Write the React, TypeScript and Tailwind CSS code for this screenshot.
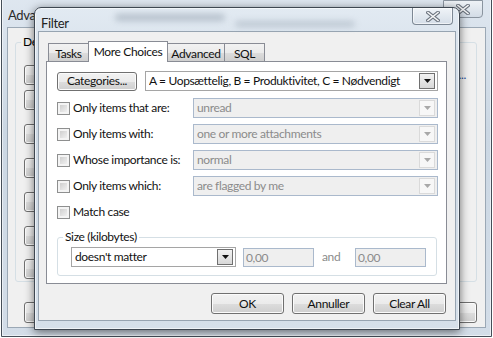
import React from 'react';

const btn =
  'flex items-center justify-center rounded-[3px] border border-[#707070] bg-[linear-gradient(to_bottom,#f2f2f2_0%,#ebebeb_50%,#dddddd_51%,#cfcfcf_100%)] shadow-[inset_0_0_0_1px_#fbfbfb] text-[#111]';

const Arrow = ({ color }: { color: string }) => (
  <svg width="7" height="4" viewBox="0 0 7 4">
    <path d="M0 0h7L3.5 4z" fill={color} />
  </svg>
);

const CloseX = () => (
  <svg width="14" height="11" viewBox="0 0 14 11">
    <path d="M2 1.5l10 8M12 1.5l-10 8" stroke="#6e7681" strokeWidth="3.6" strokeLinecap="square" />
    <path d="M2 1.5l10 8M12 1.5l-10 8" stroke="#f6f7f8" strokeWidth="1.6" strokeLinecap="square" />
  </svg>
);

const Check = () => (
  <span className="w-[13px] h-[13px] border border-[#8e8f8f] bg-[#f4f4f4] p-[2px] shrink-0">
    <span className="block w-full h-full bg-[linear-gradient(135deg,#cfcfcf,#f0f0f0)]" />
  </span>
);

// combo box, enabled
const Combo = ({ text, w }: { text: string; w: string }) => (
  <div className={`flex items-center h-[20px] ${w} border border-[#a5a5a5] bg-white pl-[3px] pr-[2px]`}>
    <span className="flex-1 truncate text-[#111]">{text}</span>
    <span className="w-[16px] h-[16px] flex items-center justify-center border border-[#707070] bg-[linear-gradient(to_bottom,#f2f2f2,#d8d8d8)]">
      <Arrow color="#111" />
    </span>
  </div>
);

// combo box, disabled
const DisCombo = ({ text }: { text: string }) => (
  <div className="flex items-center h-[20px] w-[245px] border border-[#aab9cc] bg-[#efefef] pl-[3px] pr-[2px]">
    <span className="flex-1 truncate text-[#8b8b8b]">{text}</span>
    <span className="w-[16px] h-[16px] flex items-center justify-center border border-[#dadada] bg-[#f7f7f7]">
      <Arrow color="#a8a8a8" />
    </span>
  </div>
);

const rows = [
  ['Only items that are:', 'unread'],
  ['Only items with:', 'one or more attachments'],
  ['Whose importance is:', 'normal'],
  ['Only items which:', 'are flagged by me'],
];

const tabs = [
  { label: 'Tasks', w: 'w-[41px]' },
  { label: 'More Choices', w: 'w-[80px]', active: true },
  { label: 'Advanced', w: 'w-[58px]' },
  { label: 'SQL', w: 'w-[41px]' },
];

const BackWindow = () => (
  <div className="absolute left-[1px] top-[-8px] w-[491px] h-[345px] rounded-t-[7px] border border-[#454e58] bg-[linear-gradient(to_bottom,#dfe7f0,#cbd7e3_40%,#d3dde8)] shadow-[inset_0_0_0_1px_rgba(255,255,255,0.55)]">
    <div className="h-[35px] pl-[6px] pt-[14px] text-[13px] text-[#2b2b2b]">
      <div className="w-[27px] overflow-hidden whitespace-nowrap">Advanced Find</div>
    </div>
    <div className="absolute right-[8px] top-[7px] w-[40px] h-[18px] rounded-b-[4px] border border-[#8a949f] bg-[linear-gradient(to_bottom,#eef2f6,#d3dce6)] flex items-center justify-center">
      <CloseX />
    </div>
    <div className="ml-[6px] mr-[6px] h-[299px] bg-[#f0f0f0] shadow-[0_0_0_1px_#9ba8b5] flex flex-col">
      <div className="relative mt-[14px] ml-[7px] mr-[8px] h-[240px] border border-[#d5dfe5] rounded-[3px] flex flex-col pl-[8px] pr-[10px]">
        <span className="absolute -top-[9px] left-[5px] px-[2px] bg-[#f0f0f0]">Details</span>
        <div className="mt-[22px] flex justify-between items-center">
          <div className={`${btn} w-[90px] h-[20px]`} />
          <span className="text-[#1f4f9a]">...</span>
        </div>
        <div className={`${btn} w-[90px] h-[20px] mt-[5px]`} />
        <div className={`${btn} w-[90px] h-[20px] mt-[14px]`} />
        <div className={`${btn} w-[90px] h-[20px] mt-[14px]`} />
        <div className={`${btn} w-[90px] h-[20px] mt-[14px]`} />
        <div className={`${btn} w-[90px] h-[20px] mt-[14px]`} />
        <div className={`${btn} w-[90px] h-[20px] mt-[13px]`} />
      </div>
      <div className="mt-[20px] ml-[16px] mr-[8px] flex justify-between">
        <div className={`${btn} w-[90px] h-[21px]`} />
        <div className={`${btn} w-[90px] h-[21px]`} />
      </div>
    </div>
  </div>
);

const FilterWindow = () => (
  <div className="absolute left-[34px] top-[7px] w-[426px] h-[323px] rounded-t-[7px] border border-[#3e4751] bg-[linear-gradient(to_bottom,#e2eaf2,#cfdae6_30%,#d6e0ea)] shadow-[0_2px_10px_rgba(0,0,0,0.55),inset_0_0_0_1px_rgba(255,255,255,0.6)] flex flex-col">
    <div className="h-[24px] relative pl-[6px] pt-[7px] text-[13px] text-[#222]">
      Filter
      {/* blurred desktop behind the glass */}
      <div className="absolute left-[80px] top-[6px] w-[110px] h-[7px] rounded-full bg-[#9aa6b3] blur-[3px] opacity-60" />
      <div className="absolute left-[200px] top-[13px] w-[120px] h-[6px] rounded-full bg-[#9aa6b3] blur-[3px] opacity-50" />
      <div className="absolute right-[6px] top-0 w-[41px] h-[17px] rounded-b-[4px] border border-t-0 border-[#7d8894] bg-[linear-gradient(to_bottom,#f0f4f8,#d5dee8)] shadow-[inset_0_0_0_1px_rgba(255,255,255,0.6)] flex items-center justify-center">
        <CloseX />
      </div>
    </div>
    <div className="mx-[4px] h-[288px] bg-[#f0f0f0] shadow-[0_0_0_1px_#97a4b1] flex flex-col pl-[7px] pr-[8px] pt-[9px]">
      {/* tabs */}
      <div className="flex items-end h-[20px] pl-[2px] relative z-10">
        {tabs.map((t) =>
          t.active ? (
            <div
              key={t.label}
              className={`${t.w} h-[21px] -mb-[1px] -ml-[1px] border border-b-0 border-[#898c95] bg-white flex items-start justify-center pt-[2px] text-[#111]`}
            >
              {t.label}
            </div>
          ) : (
            <div
              key={t.label}
              className={`${t.w} h-[18px] border border-b-0 border-[#898c95] -ml-[1px] first:ml-0 bg-[linear-gradient(to_bottom,#f2f2f2_0%,#ebebeb_50%,#dddddd_51%,#cfcfcf_100%)] flex items-center justify-center pt-[2px] text-[#111]`}
            >
              {t.label}
            </div>
          ),
        )}
      </div>
      {/* panel */}
      <div className="h-[223px] w-[401px] border border-[#898c95] bg-white flex flex-col pl-[10px] pr-[8px] pt-[9px]">
        <div className="flex items-center gap-[8px] h-[20px]">
          <div className={`${btn} w-[80px] h-[19px]`}>Categories...</div>
          <Combo w="w-[293px]" text="A = Uopsættelig, B = Produktivitet, C = Nødvendigt" />
        </div>
        {rows.map(([label, value], i) => (
          <div key={label} className={`flex items-center h-[20px] ${i === 0 ? 'mt-[7px]' : 'mt-[6px]'}`}>
            <Check />
            <span className="w-[123px] pl-[3px] text-[#111]">{label}</span>
            <DisCombo text={value} />
          </div>
        ))}
        <div className="flex items-center h-[20px] mt-[6px]">
          <Check />
          <span className="pl-[3px] text-[#111]">Match case</span>
        </div>
        <div className="relative mt-[15px] w-[380px] h-[39px] border border-[#d5dfe5] rounded-[3px] flex items-center pl-[13px] pt-[1px]">
          <span className="absolute -top-[9px] left-[5px] px-[2px] bg-white text-[#111]">Size (kilobytes)</span>
          <Combo w="w-[165px]" text="doesn't matter" />
          <div className="ml-[7px] w-[71px] h-[19px] border border-[#aab9cc] bg-[#efefef] pl-[2px] text-[#8b8b8b] leading-[17px]">0,00</div>
          <span className="ml-[8px] w-[33px] text-[#8b8b8b]">and</span>
          <div className="w-[71px] h-[19px] border border-[#aab9cc] bg-[#efefef] pl-[2px] text-[#8b8b8b] leading-[17px]">0,00</div>
        </div>
      </div>
      {/* buttons */}
      <div className="mt-[9px] flex justify-end gap-[8px] pr-[1px]">
        <div className={`${btn} w-[73px] h-[21px]`}>OK</div>
        <div className={`${btn} w-[73px] h-[21px]`}>Annuller</div>
        <div className={`${btn} w-[73px] h-[21px]`}>Clear All</div>
      </div>
    </div>
  </div>
);

export default function App() {
  return (
    <div className="relative w-[493px] h-[338px] overflow-hidden bg-white font-['Lato',sans-serif] text-[12px] tracking-[-0.35px] leading-[16px]">
      <BackWindow />
      <FilterWindow />
    </div>
  );
}
